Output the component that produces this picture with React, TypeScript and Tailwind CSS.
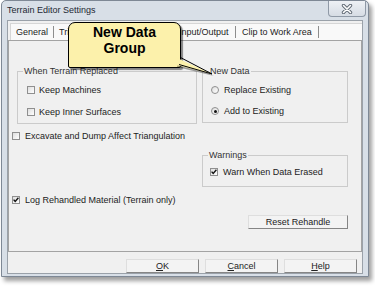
import React from 'react';

function Check({ checked }: { checked?: boolean }) {
  return (
    <span className="relative flex w-[8px] h-[8px] shrink-0 items-center justify-center border border-[#8f8f8f] bg-gradient-to-br from-[#dedede] to-white">
      {checked && (
        <svg width="8" height="8" viewBox="0 0 8 8" className="absolute left-[-1px] top-[-1px]">
          <path d="M1.6 3.6 L3.2 5.4 L6.4 1.8" fill="none" stroke="#111" strokeWidth="1.4" />
        </svg>
      )}
    </span>
  );
}

function Radio({ checked }: { checked?: boolean }) {
  return (
    <span className="flex w-[8px] h-[8px] shrink-0 items-center justify-center rounded-full border border-[#8f8f8f] bg-gradient-to-br from-[#dedede] to-white">
      {checked && <span className="w-[3px] h-[3px] rounded-full bg-[#111]" />}
    </span>
  );
}

function Btn({ w, children }: { w: string; children: React.ReactNode }) {
  return (
    <div
      className={`${w} h-[14px] flex items-center justify-center bg-[#f3f3f3] border border-t-[#dedede] border-l-[#dedede] border-r-[#858585] border-b-[#858585] text-[#222]`}
    >
      {children}
    </div>
  );
}

function Tab({ w, pl, label }: { w: string; pl: string; label: string }) {
  return (
    <div className={`${w} ${pl} h-full flex items-center justify-between shrink-0`}>
      <span>{label}</span>
      <span className="w-px h-[12px] bg-[#8d8d8d]" />
    </div>
  );
}

export default function App() {
  return (
    <div className="relative w-[375px] h-[287px] overflow-hidden bg-white font-['Liberation_Sans',Arial,sans-serif] text-[9px] leading-[11px] text-[#1c1c1c]">
      {/* window */}
      <div className="relative ml-[1px] w-[368px] h-[277px] flex flex-col rounded-t-[5px] border border-[#7e8895] bg-[#d8dfe7] shadow-[3px_4px_4px_rgba(0,0,0,0.38)]">
        <div className="h-[19px] flex items-center pl-[5px] text-[#1e2833]">Terrain Editor Settings</div>
        <div className="absolute right-[2px] top-0 w-[38px] h-[16px] flex items-center justify-center rounded-b-[4px] border border-t-0 border-[#8f99a6] bg-gradient-to-b from-[#eef1f5] to-[#d6dce4]">
          <svg width="12" height="10" viewBox="0 0 12 10">
            <path d="M2.5 1.5 L9.5 8.5 M9.5 1.5 L2.5 8.5" stroke="#5f6873" strokeWidth="3.4" strokeLinecap="round" />
            <path d="M2.5 1.5 L9.5 8.5 M9.5 1.5 L2.5 8.5" stroke="#ffffff" strokeWidth="1.6" strokeLinecap="round" />
          </svg>
        </div>

        {/* client area */}
        <div className="ml-[5px] w-[356px] h-[254px] flex flex-col border border-[#9aa1a9] bg-[#f0f0f0]">
          {/* tab strip */}
          <div className="ml-[2px] mt-[2px] h-[17px] flex items-center border-t border-l border-[#d6d6d6] bg-[#f9f9f9]">
            <Tab w="w-[43px]" pl="pl-[5px]" label="General" />
            <Tab w="w-[65px]" pl="pl-[5px]" label="Triangulation" />
            <Tab w="w-[54px]" pl="pl-[6px]" label="Rehandle" />
            <Tab w="w-[63px]" pl="pl-[6px]" label="Input/Output" />
            <Tab w="w-[83px]" pl="pl-[6px]" label="Clip to Work Area" />
          </div>

          {/* tab panel */}
          <div className="h-[212px] flex flex-col border border-[#a3a3a3] bg-[#f0f0f0] pl-[3px] pt-[30px]">
            <div className="flex items-start gap-[5px] ml-[5px]">
              <div className="relative w-[180px] h-[53px] border border-[#cbcbcb] pl-[9px] pt-[12px] flex flex-col gap-[10px]">
                <span className="absolute left-[5px] top-[-6px] px-[1px] bg-[#f0f0f0] text-[#333]">When Terrain Replaced</span>
                <div className="h-[12px] flex items-center gap-[4px]">
                  <Check />
                  <span>Keep Machines</span>
                </div>
                <div className="h-[12px] flex items-center gap-[4px]">
                  <Check />
                  <span>Keep Inner Surfaces</span>
                </div>
              </div>
              <div className="relative w-[146px] h-[52px] border border-[#cbcbcb] pl-[8px] pt-[12px] flex flex-col gap-[9px]">
                <span className="absolute left-[6px] top-[-6px] px-[1px] bg-[#f0f0f0] text-[#333]">New Data</span>
                <div className="h-[12px] flex items-center gap-[5px]">
                  <Radio />
                  <span>Replace Existing</span>
                </div>
                <div className="h-[12px] flex items-center gap-[5px]">
                  <Radio checked />
                  <span>Add to Existing</span>
                </div>
              </div>
            </div>

            <div className="mt-[6px] h-[12px] flex items-center gap-[5px]">
              <Check />
              <span>Excavate and Dump Affect Triangulation</span>
            </div>

            <div className="relative mt-[13px] ml-[190px] w-[146px] h-[32px] border border-[#cbcbcb] pl-[7px] pt-[10px]">
              <span className="absolute left-[5px] top-[-6px] px-[1px] bg-[#f0f0f0] text-[#333]">Warnings</span>
              <div className="h-[12px] flex items-center gap-[5px]">
                <Check checked />
                <span>Warn When Data Erased</span>
              </div>
            </div>

            <div className="mt-[7px] h-[12px] flex items-center gap-[5px]">
              <Check checked />
              <span>Log Rehandled Material (Terrain only)</span>
            </div>

            <div className="mt-[9px] ml-[236px]">
              <Btn w="w-[100px]">Reset Rehandle</Btn>
            </div>
          </div>

          {/* footer */}
          <div className="flex justify-end gap-[6px] pr-[5px] pt-[7px]">
            <Btn w="w-[73px]">
              <span><span className="underline">O</span>K</span>
            </Btn>
            <Btn w="w-[73px]">
              <span><span className="underline">C</span>ancel</span>
            </Btn>
            <Btn w="w-[73px]">
              <span><span className="underline">H</span>elp</span>
            </Btn>
          </div>
        </div>
      </div>

      {/* callout annotation */}
      <div className="absolute left-[68px] top-[22px] w-[113px] h-[46px] pt-[1px] rounded-t-[7px] rounded-b-[2px] border border-black bg-[#fcf1ab] shadow-[2px_2px_1px_rgba(0,0,0,0.45)] text-center text-[14px] leading-[16px] font-bold text-black">
        New Data
        <br />
        Group
      </div>
      <svg className="absolute left-0 top-0 pointer-events-none" width="375" height="287" viewBox="0 0 375 287">
        <polygon points="179,60 214,76 177,67" fill="rgba(0,0,0,0.35)" />
        <polygon points="176,57.5 212,74 174,64.5" fill="#fcf1ab" />
        <path d="M180.5 57.5 L212 74 L179 64.5" fill="none" stroke="#000" strokeWidth="1" />
      </svg>
    </div>
  );
}
